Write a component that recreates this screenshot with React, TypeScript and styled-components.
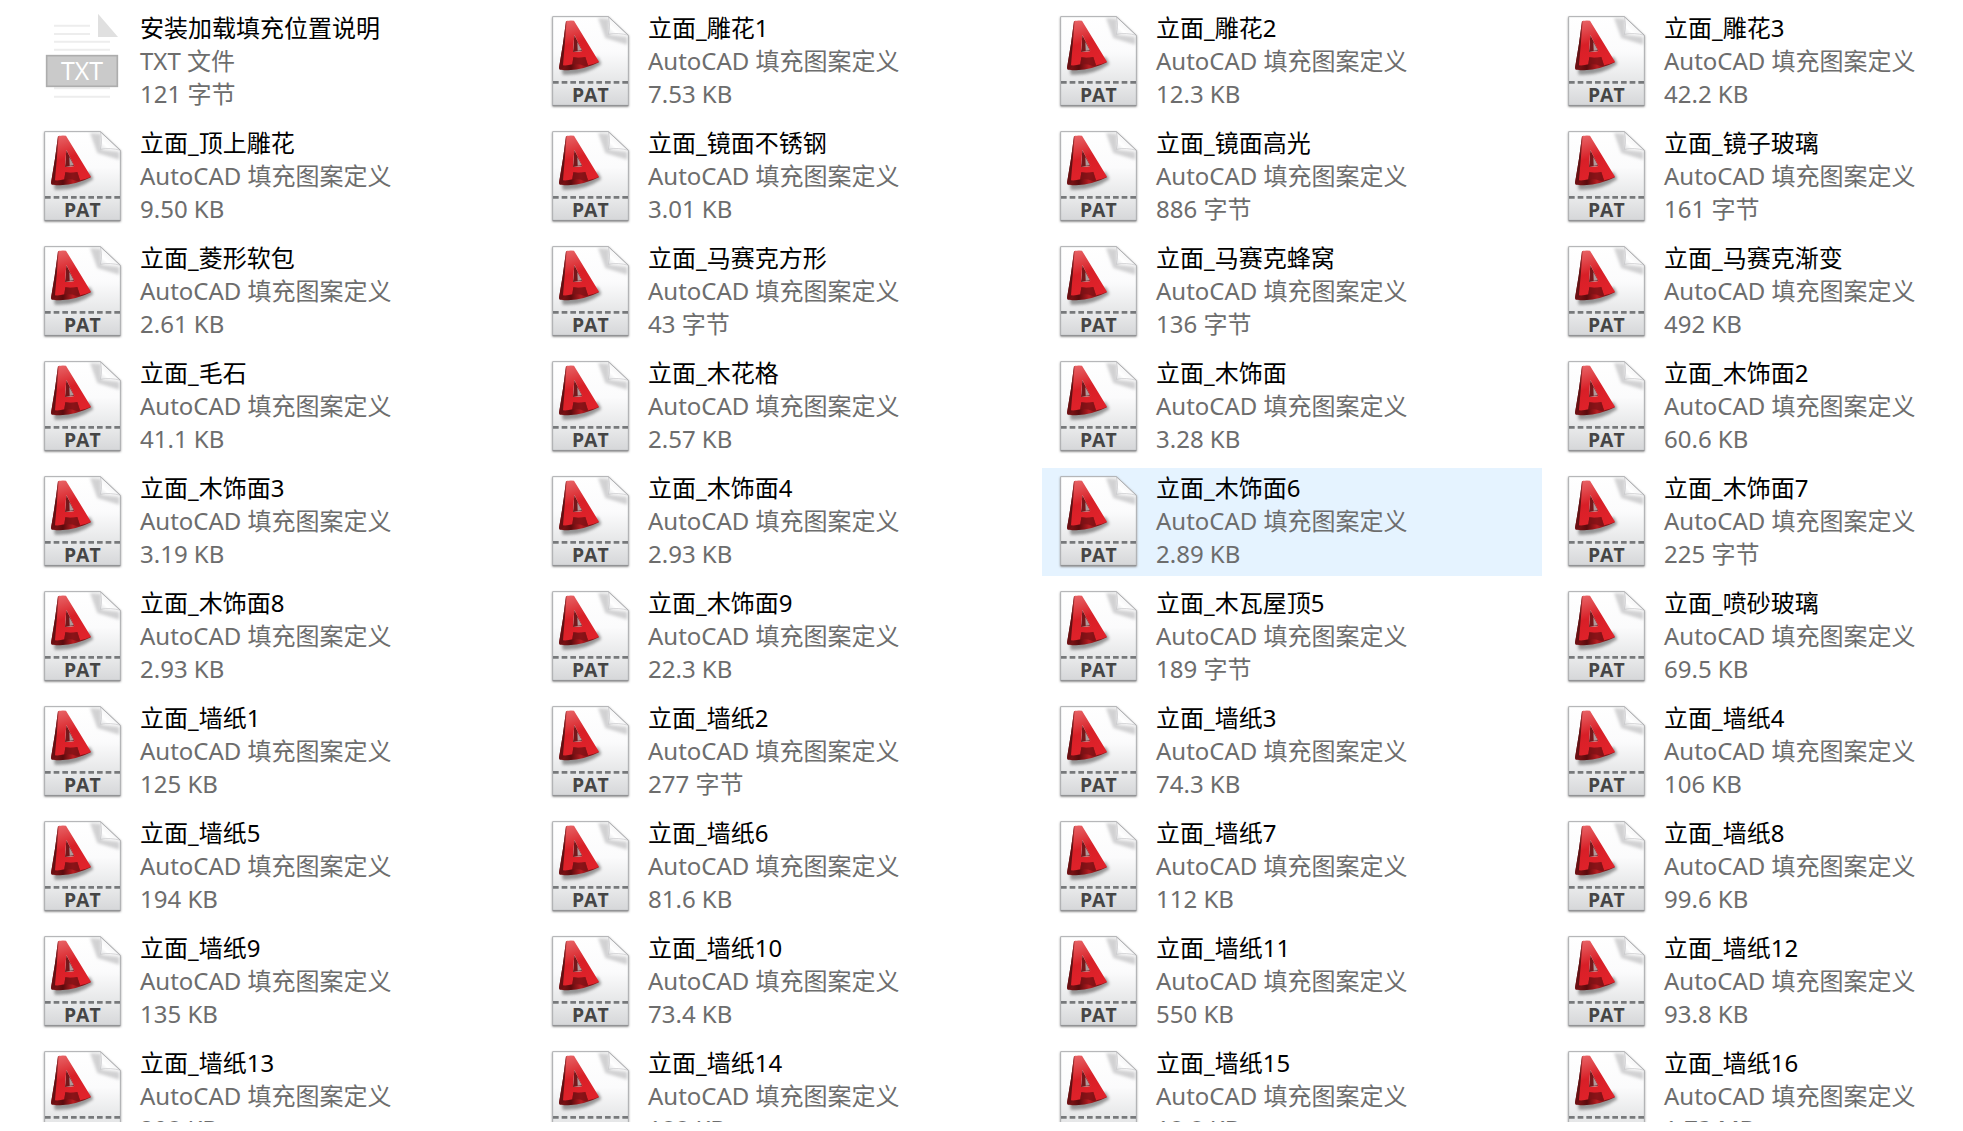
import React from "react";
import styled, { createGlobalStyle } from "styled-components";

const GlobalStyle = createGlobalStyle`
  *, *::before, *::after { box-sizing: border-box; }
  body {
    margin: 0;
    background: #ffffff;
    font-family: "Noto Sans", "Noto Sans CJK SC", sans-serif;
    font-size: 24px;
    line-height: 33px;
  }
`;

const Pane = styled.main`
  height: 100vh;
  padding-bottom: 9px;
`;

const Viewport = styled.div`
  height: 100%;
  overflow: hidden;
`;

const Tiles = styled.ul`
  display: grid;
  grid-template-columns: repeat(3, minmax(0, 500fr)) minmax(0, 413fr);
  gap: 7px 8px;
  margin: 0;
  padding: 8px 0 0 26px;
  list-style: none;
`;

const Tile = styled.li<{ $active?: boolean }>`
  display: flex;
  align-items: center;
  gap: 16px;
  height: 108px;
  padding-left: 14px;
  background: ${(p) => (p.$active ? "#e5f3ff" : "transparent")};
`;

const IconSvg = styled.svg`
  flex: none;
  display: block;
  width: 84px;
  height: 96px;
  overflow: visible;
`;

const Details = styled.div`
  min-width: 0;
  padding-bottom: 4px;
  color: #6d6d6d;
  white-space: nowrap;
`;

const Line = styled.div`
  height: 33px;
`;

const Name = styled(Line)`
  color: #000000;
`;

const IconText = styled.text<{ $bold?: boolean }>`
  font-family: "Open Sans", sans-serif;
  font-size: ${(p) => (p.$bold ? 58 : 75)}px;
  font-weight: ${(p) => (p.$bold ? 700 : 400)};
  fill: ${(p) => (p.$bold ? "#454545" : "#ffffff")};
  text-anchor: middle;
`;

const SharedDefs = styled.svg`
  display: block;
  width: 0;
  height: 0;
`;

function PatDefs() {
  return (
    <SharedDefs aria-hidden="true">
      <defs>
        <linearGradient id="paper" x1="0" y1="0" x2="0" y2="1">
          <stop offset="0" stopColor="#ffffff" />
          <stop offset="0.4" stopColor="#fbfbfc" />
          <stop offset="0.73" stopColor="#e6e7e8" />
          <stop offset="1" stopColor="#d9dadc" />
        </linearGradient>
        <linearGradient id="band" x1="0" y1="0" x2="0" y2="1">
          <stop offset="0" stopColor="#e9eaeb" />
          <stop offset="1" stopColor="#d6d7d9" />
        </linearGradient>
        <linearGradient id="fold" x1="0" y1="1" x2="0.6" y2="0.4">
          <stop offset="0" stopColor="#dcdddf" />
          <stop offset="0.45" stopColor="#ffffff" />
          <stop offset="1" stopColor="#f2f2f3" />
        </linearGradient>
        <linearGradient id="face" x1="0" y1="0" x2="0.25" y2="1">
          <stop offset="0" stopColor="#e9686a" />
          <stop offset="0.35" stopColor="#de3a3f" />
          <stop offset="0.55" stopColor="#d81f27" />
          <stop offset="1" stopColor="#e0222a" />
        </linearGradient>
        <linearGradient id="side" x1="0" y1="0" x2="0" y2="1">
          <stop offset="0" stopColor="#b8393c" />
          <stop offset="0.45" stopColor="#5a1113" />
          <stop offset="1" stopColor="#6d1013" />
        </linearGradient>
        <linearGradient id="cone" x1="0" y1="0" x2="1" y2="0">
          <stop offset="0" stopColor="#8c1619" />
          <stop offset="0.3" stopColor="#5a0b0d" />
          <stop offset="0.55" stopColor="#b81c21" />
          <stop offset="0.8" stopColor="#7a1013" />
          <stop offset="1" stopColor="#a8191d" />
        </linearGradient>
        <filter id="soft" x="-30%" y="-30%" width="160%" height="160%">
          <feGaussianBlur stdDeviation="5" />
        </filter>
        <filter id="edge" x="-10%" y="-10%" width="120%" height="120%">
          <feGaussianBlur stdDeviation="2.5" />
        </filter>
      </defs>
    </SharedDefs>
  );
}

function PatIcon() {
  return (
    <IconSvg viewBox="0 0 252 288" role="img" aria-label="PAT">
      <path d="M13 10H182L242 66V278H13Z" fill="#8a8a8a" filter="url(#edge)" />
      <path d="M14 8H181L241 64V274H14Z" fill="url(#paper)" />
      <path d="M15 206H240V273H15Z" fill="url(#band)" />
      <path d="M150 12L184 14V62L238 68L238 92L172 72Z" fill="#a5a5a7" opacity="0.5" filter="url(#soft)" />
      <path d="M181 8C185 24 186 42 181 61C200 57 222 58 241 64Z" fill="url(#fold)" stroke="#c2c3c5" strokeWidth="2" strokeLinejoin="round" />
      <path d="M14 8H181L241 64V274H14Z" fill="none" stroke="#aeafb1" strokeWidth="3" />
      <path d="M14 275H241" stroke="#929395" strokeWidth="4" />
      <path d="M15 205H241" stroke="#77797b" strokeWidth="8" strokeDasharray="17 9" />
      <path d="M40 152L150 130L160 150Q110 186 44 182Z" fill="#4b4b4b" opacity="0.55" filter="url(#soft)" />
      <path d="M54 22Q46 90 33 162Q35 169 60 169Q112 166 153 145L122 120L72 118Z" fill="url(#cone)" />
      <path d="M54 22Q46 90 33 162L35 167Q43 169 52 153L62 80L60 20Z" fill="url(#side)" />
      <path d="M79 62L75 114L104 111Z" fill="#74181b" />
      <path d="M88 84L89 110L102 109Z" fill="#b09a9b" />
      <path
        d="M56 21Q66 18 78 20L153 143Q138 150 120 154L112 129Q92 133 76 130L73 151Q60 155 45 154ZM79 62L75 114Q90 115 103 111Z"
        fill="url(#face)"
        fillRule="evenodd"
      />
      <path d="M76 130Q92 133 112 129L120 154L112 157Q92 148 73 151Z" fill="#7c1215" opacity="0.75" />
      <IconText $bold x="127" y="263">PAT</IconText>
    </IconSvg>
  );
}

function TxtIcon() {
  return (
    <IconSvg viewBox="0 0 252 288" role="img" aria-label="TXT">
      <path
        d="M42 35H150M42 60H150M42 83H210M42 107H210M42 223H210M42 248H210"
        stroke="#ededed"
        strokeWidth="6"
      />
      <path d="M174 -1L234 69H174Z" fill="#e0e0e0" />
      <rect x="20" y="125" width="212" height="92" fill="#cacaca" stroke="#adadad" strokeWidth="5" />
      <IconText x="126" y="198">TXT</IconText>
    </IconSvg>
  );
}

type FileItem = { name: string; size: string; type?: string; txt?: boolean; active?: boolean };

const pat = (name: string, size: string, active = false): FileItem => ({
  name: `立面_${name}`,
  size,
  active,
});

const files: FileItem[] = [
  { name: "安装加载填充位置说明", type: "TXT 文件", size: "121 字节", txt: true },
  pat("雕花1", "7.53 KB"),
  pat("雕花2", "12.3 KB"),
  pat("雕花3", "42.2 KB"),
  pat("顶上雕花", "9.50 KB"),
  pat("镜面不锈钢", "3.01 KB"),
  pat("镜面高光", "886 字节"),
  pat("镜子玻璃", "161 字节"),
  pat("菱形软包", "2.61 KB"),
  pat("马赛克方形", "43 字节"),
  pat("马赛克蜂窝", "136 字节"),
  pat("马赛克渐变", "492 KB"),
  pat("毛石", "41.1 KB"),
  pat("木花格", "2.57 KB"),
  pat("木饰面", "3.28 KB"),
  pat("木饰面2", "60.6 KB"),
  pat("木饰面3", "3.19 KB"),
  pat("木饰面4", "2.93 KB"),
  pat("木饰面6", "2.89 KB", true),
  pat("木饰面7", "225 字节"),
  pat("木饰面8", "2.93 KB"),
  pat("木饰面9", "22.3 KB"),
  pat("木瓦屋顶5", "189 字节"),
  pat("喷砂玻璃", "69.5 KB"),
  pat("墙纸1", "125 KB"),
  pat("墙纸2", "277 字节"),
  pat("墙纸3", "74.3 KB"),
  pat("墙纸4", "106 KB"),
  pat("墙纸5", "194 KB"),
  pat("墙纸6", "81.6 KB"),
  pat("墙纸7", "112 KB"),
  pat("墙纸8", "99.6 KB"),
  pat("墙纸9", "135 KB"),
  pat("墙纸10", "73.4 KB"),
  pat("墙纸11", "550 KB"),
  pat("墙纸12", "93.8 KB"),
  pat("墙纸13", "208 KB"),
  pat("墙纸14", "188 KB"),
  pat("墙纸15", "18.8 KB"),
  pat("墙纸16", "1.73 MB"),
];

export default function App() {
  return (
    <>
      <GlobalStyle />
      <PatDefs />
      <Pane lang="zh-CN">
        <Viewport>
          <Tiles>
            {files.map((file) => (
              <Tile key={file.name} $active={file.active}>
                {file.txt ? <TxtIcon /> : <PatIcon />}
                <Details>
                  <Name>{file.name}</Name>
                  <Line>{file.type ?? "AutoCAD 填充图案定义"}</Line>
                  <Line>{file.size}</Line>
                </Details>
              </Tile>
            ))}
          </Tiles>
        </Viewport>
      </Pane>
    </>
  );
}
